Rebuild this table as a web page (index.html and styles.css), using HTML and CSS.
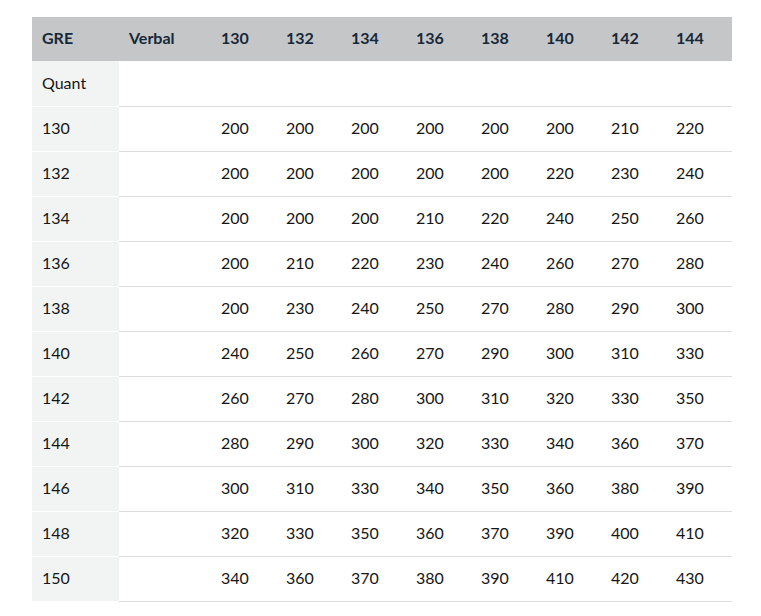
FILE: index.html
```html
<!DOCTYPE html>
<html>
<head>
<meta charset="utf-8">
<link rel="stylesheet" href="styles.css">
</head>
<body>
<table class="score-table">
  <colgroup>
    <col class="c-first"><col class="c-second">
    <col class="c-num"><col class="c-num"><col class="c-num"><col class="c-num">
    <col class="c-num"><col class="c-num"><col class="c-num"><col class="c-last">
  </colgroup>
  <thead>
    <tr><th>GRE</th><th>Verbal</th><th>130</th><th>132</th><th>134</th><th>136</th><th>138</th><th>140</th><th>142</th><th>144</th></tr>
  </thead>
  <tbody>
    <tr><td>Quant</td><td></td><td></td><td></td><td></td><td></td><td></td><td></td><td></td><td></td></tr>
    <tr><td>130</td><td></td><td>200</td><td>200</td><td>200</td><td>200</td><td>200</td><td>200</td><td>210</td><td>220</td></tr>
    <tr><td>132</td><td></td><td>200</td><td>200</td><td>200</td><td>200</td><td>200</td><td>220</td><td>230</td><td>240</td></tr>
    <tr><td>134</td><td></td><td>200</td><td>200</td><td>200</td><td>210</td><td>220</td><td>240</td><td>250</td><td>260</td></tr>
    <tr><td>136</td><td></td><td>200</td><td>210</td><td>220</td><td>230</td><td>240</td><td>260</td><td>270</td><td>280</td></tr>
    <tr><td>138</td><td></td><td>200</td><td>230</td><td>240</td><td>250</td><td>270</td><td>280</td><td>290</td><td>300</td></tr>
    <tr><td>140</td><td></td><td>240</td><td>250</td><td>260</td><td>270</td><td>290</td><td>300</td><td>310</td><td>330</td></tr>
    <tr><td>142</td><td></td><td>260</td><td>270</td><td>280</td><td>300</td><td>310</td><td>320</td><td>330</td><td>350</td></tr>
    <tr><td>144</td><td></td><td>280</td><td>290</td><td>300</td><td>320</td><td>330</td><td>340</td><td>360</td><td>370</td></tr>
    <tr><td>146</td><td></td><td>300</td><td>310</td><td>330</td><td>340</td><td>350</td><td>360</td><td>380</td><td>390</td></tr>
    <tr><td>148</td><td></td><td>320</td><td>330</td><td>350</td><td>360</td><td>370</td><td>390</td><td>400</td><td>410</td></tr>
    <tr><td>150</td><td></td><td>340</td><td>360</td><td>370</td><td>380</td><td>390</td><td>410</td><td>420</td><td>430</td></tr>
  </tbody>
</table>
</body>
</html>
```

FILE: styles.css
```css
html, body {
  margin: 0;
  padding: 0;
  background: #ffffff;
}
body {
  padding: 17px 0 0 32px;
  font-family: "Lato", "Liberation Sans", sans-serif;
  font-size: 16px;
  color: #151515;
}
.score-table {
  border-collapse: collapse;
  table-layout: fixed;
  width: 700px;
}
.c-first { width: 87px; }
.c-second { width: 92px; }
.c-num { width: 65px; }
.c-last { width: 66px; }
.score-table th {
  background: #c5c6c8;
  color: #16283a;
  font-weight: 700;
  text-align: left;
  height: 44px;
  padding: 0 0 3px 10px;
  box-sizing: border-box;
  vertical-align: middle;
}
.score-table td {
  height: 45px;
  padding: 0 0 2px 10px;
  box-sizing: border-box;
  border-bottom: 1px solid #dcdcdc;
  vertical-align: middle;
  text-align: left;
}
.score-table td:first-child {
  background: #f2f4f3;
  border-bottom: 1px solid #ffffff;
}
```
